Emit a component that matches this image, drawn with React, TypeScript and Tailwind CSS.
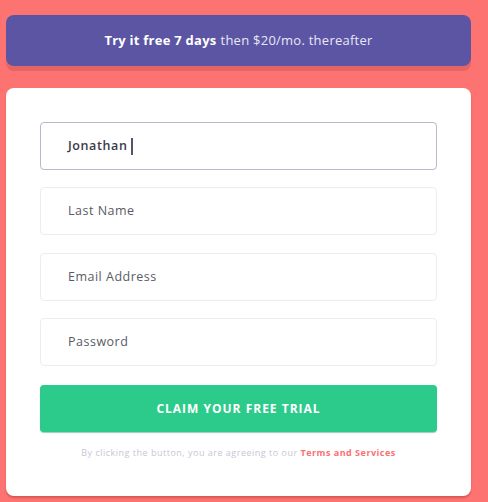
const fields = [
  { label: "Last Name", mt: "mt-[17px]" },
  { label: "Email Address", mt: "mt-[18px]" },
  { label: "Password", mt: "mt-[17px]" },
];

export default function App() {
  return (
    <div
      className="w-[488px] h-[502px] overflow-hidden bg-[#fd7372] flex flex-col px-[6px] pt-[15px]"
      style={{ fontFamily: '"Open Sans", "Noto Sans", sans-serif' }}
    >
      <div className="h-[51px] shrink-0 w-[465px] rounded-lg bg-[#5b55a3] shadow-[0_5px_0_#e46566] flex items-center justify-center text-[13px] text-[#e9e7f6] tracking-[0.25px]">
        <span className="font-bold text-white">Try it free 7 days</span>
        <span className="ml-1">then $20/mo. thereafter</span>
      </div>

      <div className="mt-[22px] w-[465px] h-[408px] shrink-0 rounded-lg bg-white shadow-[0_2px_2px_rgba(150,40,40,0.35)] px-[34px] pt-[34px] flex flex-col">
        <div className="h-[48px] rounded-[4px] border border-[#b9b8cf] flex items-center pl-[27px] text-[12.5px] font-semibold tracking-[0.6px] text-[#3b3b48]">
          Jonathan
          <span className="ml-[4px] w-[1.5px] h-[17px] bg-[#55556a]" />
        </div>
        {fields.map((f) => (
          <div
            key={f.label}
            className={`${f.mt} h-[48px] rounded-[4px] border border-[#ececf2] flex items-center pl-[27px] text-[12.5px] font-medium tracking-[0.5px] text-[#5a5a66]`}
          >
            {f.label}
          </div>
        ))}
        <button className="mt-[19px] h-[47px] rounded-[4px] bg-[#2ccb8b] shadow-[0_1px_1px_rgba(20,120,80,0.4)] text-white text-[12px] font-bold tracking-[1px]">
          CLAIM YOUR FREE TRIAL
        </button>
        <p className="mt-[14px] text-center text-[9px] tracking-[0.5px] text-[#c6c6d6]">
          By clicking the button, you are agreeing to our{" "}
          <span className="font-bold text-[#fb6f74]">Terms and Services</span>
        </p>
      </div>
    </div>
  );
}
